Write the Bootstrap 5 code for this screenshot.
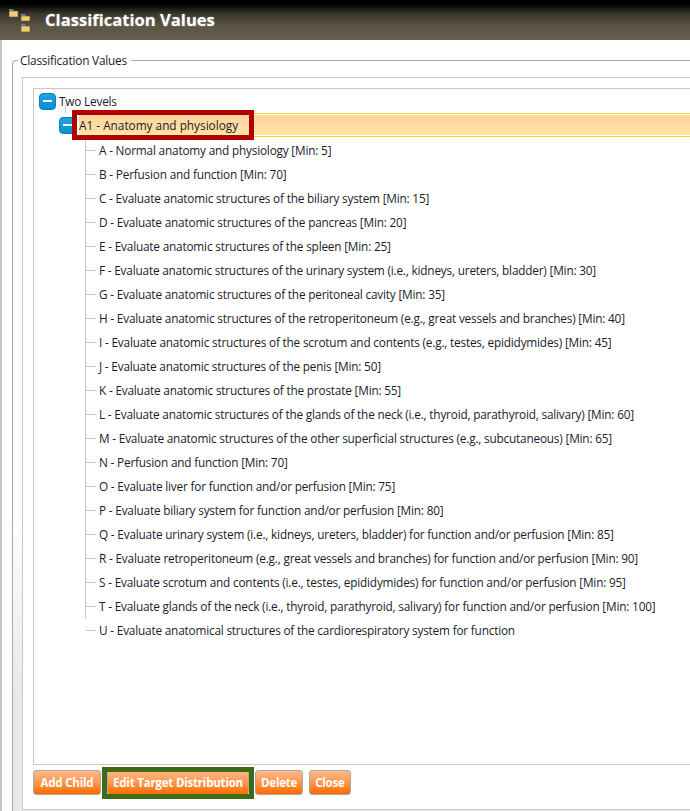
<!DOCTYPE html>
<html lang="en"><head><meta charset="utf-8"><title>Classification Values</title>
<link href="https://cdn.jsdelivr.net/npm/bootstrap@5.3.0/dist/css/bootstrap.min.css" rel="stylesheet">
<style>
html,body{height:811px;overflow:hidden;}
body{font-family:"Open Sans",sans-serif;font-size:11.8px;letter-spacing:-.19px;color:#1b1b2b;background:#fff;position:relative;}
.titlebar{height:40px;background:linear-gradient(#000 0,#000 4px,#3b372d 14px,#5a5445 26px,#675f4f 40px);padding-left:9px;gap:10px;}
.titlebar h1{font-size:16.6px;font-weight:700;color:#fff;margin:0;line-height:40px;letter-spacing:0;text-shadow:0 0 2px rgba(255,255,255,.4);}
.shell{border-left:2px solid #c4c4c4;height:771px;padding:12px 0 0 10px;}
.fs{border:1px solid #aaa;border-right:0;border-bottom:0;border-radius:4px 0 0 0;margin:0;padding:9px 0 0 0;height:760px;min-width:0;background:linear-gradient(#fff 60%,#e8e8e8 85%);}
.fs legend{float:none;width:auto;font-size:11.8px;line-height:16px;margin:0 0 0 5px;padding:0 4px 0 2px;color:#1b1b2b;}
.inner{margin-left:9px;border:1px solid #c8c8c8;border-right:0;height:733px;background:#fff;padding:10px 0 0 10px;}
.treebox{border:1px solid #c8c8c8;border-right:0;height:677px;padding:0 0 0 5px;}
.treelist,.treelist ul{list-style:none;margin:0;padding:0;}
.rowline{height:24px;line-height:24px;white-space:nowrap;}
.tog{width:17px;height:17px;border-radius:4px;background:linear-gradient(#1ca3e0,#0a90d2);border:1px solid #0c7db8;flex:none;}
.tog::after{content:"";width:9px;height:2px;background:#fff;}
.top-row{gap:3px;}
.mid{position:relative;margin-left:20px;}
.mid::before{content:"";position:absolute;left:6px;top:-8px;height:8px;border-left:1px solid #c8c8c8;}
.selrow{position:relative;}
.seltext{flex:1;margin-left:3px;height:24px;background:linear-gradient(#ffd2a0,#fbe7a2);border-top:1px solid #ffd11f;border-bottom:1px solid #ffd11f;line-height:22px;letter-spacing:0;box-shadow:inset 0 1px 0 #fff,inset 0 -1px 0 #fff;}
.kids{margin-left:26px !important;border-left:1px solid #c8c8c8;height:481px;margin-top:1px !important;}
.kids li{padding-left:13px;position:relative;}
.kids li::before{content:"";position:absolute;left:0;top:12px;width:10px;border-top:1px solid #c8c8c8;}
.actions{gap:6px;margin-top:5px;}
.orange{font-family:"Open Sans",sans-serif;font-size:11.5px;letter-spacing:-.2px;font-weight:700;line-height:16px;padding:3px 5px;height:25px;color:#fff;border:1px solid #a9a9a9;border-radius:3px;background:linear-gradient(#ffb88a,#ff9b55 45%,#ff6a00);}
.orange:hover{color:#fff;background:linear-gradient(#ffb88a,#ff6a00);border-color:#a9a9a9;}
.wide-first{width:68px;}
.note{position:absolute;border-style:solid;border-width:5px;pointer-events:none;}
.note-red{left:72px;top:110px;width:182px;height:30px;border-color:#b00000;}
.note-green{left:102px;top:767px;width:152px;height:32px;border-color:#3f6b17;}
</style></head>
<body>
<header class="titlebar d-flex align-items-center">
<svg width="26" height="26" viewBox="0 0 26 26" aria-hidden="true"><g stroke="#57503f" stroke-width=".6"><path d="M0 4h9v6H0z" fill="#f3cc6c"/><path d="M12 9h9v5h-9z" fill="#f3cc6c"/><path d="M12 19h9v6h-9z" fill="#f3cc6c"/></g><path d="M0 2h4l1 2H0zM12 7h4l1 2h-5zM12 17h4l1 2h-5z" fill="#6f7a92"/></svg>
<h1>Classification Values</h1>
</header>
<main class="shell">
<fieldset class="fs">
<legend>Classification Values</legend>
<div class="inner">
<div class="treebox">
<ul class="treelist">
<li>
<div class="rowline d-flex align-items-center top-row"><span class="tog d-flex align-items-center justify-content-center"></span><span>Two Levels</span></div>
<div class="mid">
<div class="rowline selrow d-flex align-items-center"><span class="tog d-flex align-items-center justify-content-center"></span><span class="seltext">A1 - Anatomy and physiology</span></div>
<ul class="kids">
<li class="rowline">A - Normal anatomy and physiology [Min: 5]</li>
<li class="rowline">B - Perfusion and function [Min: 70]</li>
<li class="rowline">C - Evaluate anatomic structures of the biliary system [Min: 15]</li>
<li class="rowline">D - Evaluate anatomic structures of the pancreas [Min: 20]</li>
<li class="rowline">E - Evaluate anatomic structures of the spleen [Min: 25]</li>
<li class="rowline">F - Evaluate anatomic structures of the urinary system (i.e., kidneys, ureters, bladder) [Min: 30]</li>
<li class="rowline">G - Evaluate anatomic structures of the peritoneal cavity [Min: 35]</li>
<li class="rowline">H - Evaluate anatomic structures of the retroperitoneum (e.g., great vessels and branches) [Min: 40]</li>
<li class="rowline">I - Evaluate anatomic structures of the scrotum and contents (e.g., testes, epididymides) [Min: 45]</li>
<li class="rowline">J - Evaluate anatomic structures of the penis [Min: 50]</li>
<li class="rowline">K - Evaluate anatomic structures of the prostate [Min: 55]</li>
<li class="rowline">L - Evaluate anatomic structures of the glands of the neck (i.e., thyroid, parathyroid, salivary) [Min: 60]</li>
<li class="rowline">M - Evaluate anatomic structures of the other superficial structures (e.g., subcutaneous) [Min: 65]</li>
<li class="rowline">N - Perfusion and function [Min: 70]</li>
<li class="rowline">O - Evaluate liver for function and/or perfusion [Min: 75]</li>
<li class="rowline">P - Evaluate biliary system for function and/or perfusion [Min: 80]</li>
<li class="rowline">Q - Evaluate urinary system (i.e., kidneys, ureters, bladder) for function and/or perfusion [Min: 85]</li>
<li class="rowline">R - Evaluate retroperitoneum (e.g., great vessels and branches) for function and/or perfusion [Min: 90]</li>
<li class="rowline">S - Evaluate scrotum and contents (i.e., testes, epididymides) for function and/or perfusion [Min: 95]</li>
<li class="rowline">T - Evaluate glands of the neck (i.e., thyroid, parathyroid, salivary) for function and/or perfusion [Min: 100]</li>
<li class="rowline">U - Evaluate anatomical structures of the cardiorespiratory system for function</li>
</ul>
</div>
</li>
</ul>
</div>
<div class="actions d-flex">
<button type="button" class="btn orange wide-first">Add Child</button>
<button type="button" class="btn orange">Edit Target Distribution</button>
<button type="button" class="btn orange">Delete</button>
<button type="button" class="btn orange">Close</button>
</div>
</div>
</fieldset>
</main>
<div class="note note-red"></div>
<div class="note note-green"></div>
<script src="https://cdn.jsdelivr.net/npm/bootstrap@5.3.0/dist/js/bootstrap.bundle.min.js"></script>
</body></html>
